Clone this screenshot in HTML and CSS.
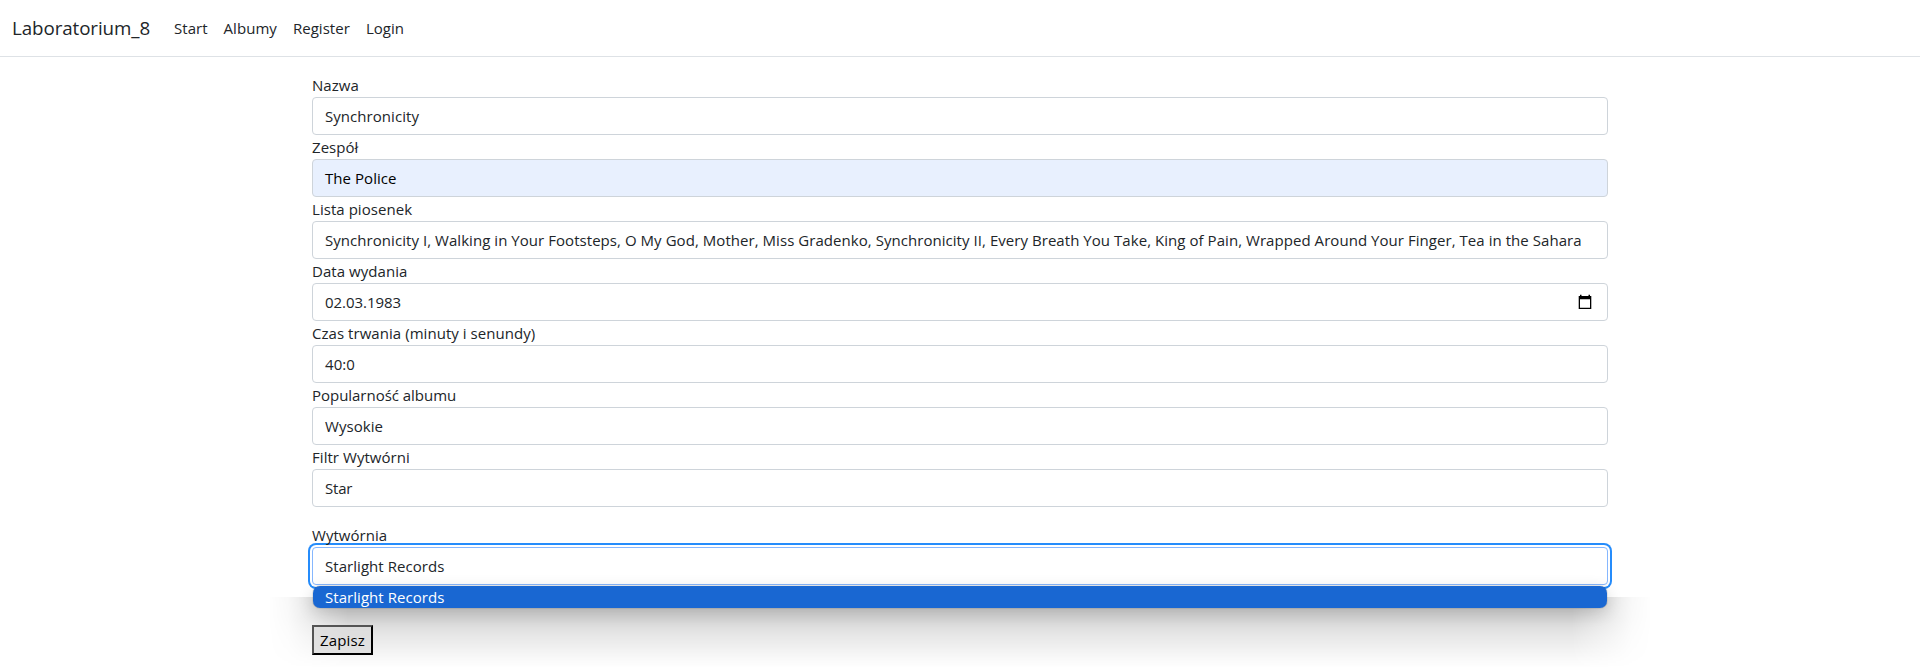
FILE: index.html
```html
<!DOCTYPE html>
<html lang="pl">
<head>
<meta charset="utf-8">
<title>Laboratorium_8</title>
<link rel="stylesheet" href="styles.css">
</head>
<body>
<header class="navbar">
  <a class="brand">Laboratorium_8</a>
  <nav class="nav">
    <a class="nav-link">Start</a>
    <a class="nav-link">Albumy</a>
    <a class="nav-link">Register</a>
    <a class="nav-link">Login</a>
  </nav>
</header>
<main class="container">
  <div class="field"><label class="label">Nazwa</label><div class="control">Synchronicity</div></div>
  <div class="field"><label class="label">Zespół</label><div class="control autofill">The Police</div></div>
  <div class="field"><label class="label">Lista piosenek</label><div class="control">Synchronicity I, Walking in Your Footsteps, O My God, Mother, Miss Gradenko, Synchronicity II, Every Breath You Take, King of Pain, Wrapped Around Your Finger, Tea in the Sahara</div></div>
  <div class="field"><label class="label">Data wydania</label><div class="control date"><span class="digits">02.03.1983</span>
    <svg class="calendar" width="16" height="16" viewBox="0 0 16 16"><path d="M3 .8h1.5V2h7V.8H13V2h1.3v13H1.7V2H3zM3 5.2v8.5h10V5.2z" fill="#000" fill-rule="evenodd"/></svg></div></div>
  <div class="field"><label class="label">Czas trwania (minuty i senundy)</label><div class="control">40:0</div></div>
  <div class="field"><label class="label popularity">Popularność albumu</label><div class="control">Wysokie</div></div>
  <div class="field"><label class="label">Filtr Wytwórni</label><div class="control short">Star</div></div>
  <div class="field select-field"><label class="label">Wytwórnia</label><div class="control focused">Starlight Records</div>
    <div class="dropdown-shade"></div>
    <div class="dropdown"><div class="option">Starlight Records</div></div></div>
  <button class="submit">Zapisz</button>
</main>
</body>
</html>
```
FILE: styles.css
```css
* { box-sizing: border-box; }
body {
  margin: 0;
  height: 667px;
  overflow: hidden;
  background: #fff;
  color: #212529;
  font: 15px/24px "Open Sans", "Noto Sans", sans-serif;
  letter-spacing: 0.05px;
}
.navbar {
  display: flex;
  align-items: center;
  height: 57px;
  padding: 0 12px;
  border-bottom: 1px solid #dee2e6;
}
.brand {
  width: 138px;
  margin-right: 16px;
  font-size: 18.75px;
  line-height: 30px;
  letter-spacing: -0.08px;
}
.nav { display: flex; }
.nav-link { padding: 8px; letter-spacing: 0.04px; }
.container {
  width: 1320px;
  margin: 16px auto 0;
  padding: 0 12px;
}
.label { display: block; height: 24px; }
.popularity { letter-spacing: -0.03px; }
.control {
  display: flex;
  align-items: center;
  height: 38px;
  padding: 0 12px;
  border: 1px solid #ced4da;
  border-radius: 4px;
  background: #fff;
  white-space: nowrap;
}
.autofill { background: #e8f0fe; color: #000; }
.date { justify-content: space-between; padding-right: 14px; }
.digits { letter-spacing: -0.05px; }
.short { letter-spacing: -0.2px; }
.select-field { position: relative; margin-top: 16px; }
.focused {
  border-color: #86b7fe;
  box-shadow: 0 0 0 2px #fff, 0 0 0 4px #258cfb;
}
/* wide, soft shadow under the open list */
.dropdown-shade {
  position: absolute;
  top: 74px;
  left: -44px;
  right: -44px;
  height: 72px;
  background: linear-gradient(rgba(0, 0, 0, 0.22), rgba(0, 0, 0, 0.17) 28%, rgba(0, 0, 0, 0.09) 55%, rgba(0, 0, 0, 0.02) 88%, transparent);
  -webkit-mask-image: linear-gradient(90deg, transparent, rgba(0, 0, 0, 0.12) 20px, rgba(0, 0, 0, 0.5) 44px, #000 80px, #000 calc(100% - 80px), rgba(0, 0, 0, 0.5) calc(100% - 44px), rgba(0, 0, 0, 0.12) calc(100% - 20px), transparent);
  mask-image: linear-gradient(90deg, transparent, rgba(0, 0, 0, 0.12) 20px, rgba(0, 0, 0, 0.5) 44px, #000 80px, #000 calc(100% - 80px), rgba(0, 0, 0, 0.5) calc(100% - 44px), rgba(0, 0, 0, 0.12) calc(100% - 20px), transparent);
}
.dropdown {
  position: absolute;
  top: 63px;
  left: 1px;
  right: 1px;
  border-radius: 7px;
  box-shadow: 0 0 1px rgba(0, 0, 0, 0.7), 0 4px 16px rgba(0, 0, 0, 0.16);
}
.option {
  height: 22px;
  padding: 0 12px;
  border-radius: 7px;
  background: #1967d2;
  color: #fff;
  line-height: 22px;
}
.submit {
  position: relative;
  display: block;
  width: 61px;
  height: 30px;
  margin-top: 40px;
  padding: 0;
  border: 2px outset #000;
  background: rgba(220, 220, 220, 0.8);
  color: #000;
  font: inherit;
  line-height: 24px;
  letter-spacing: 0.15px;
}
```
